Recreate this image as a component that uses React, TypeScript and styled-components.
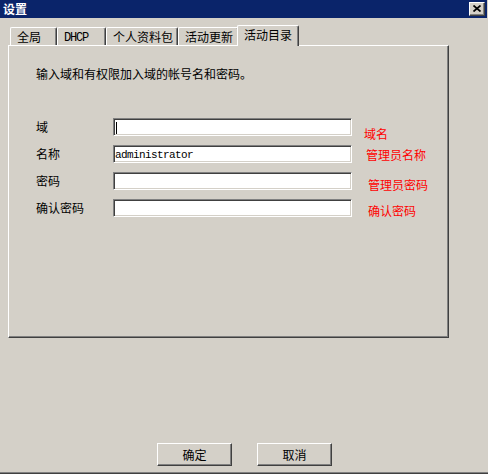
import React from "react";
import styled, { createGlobalStyle, css } from "styled-components";

const GlobalStyle = createGlobalStyle`
  html, body { margin: 0; padding: 0; background: #d4d0c8; }
  body {
    font-family: "Noto Sans CJK SC", "Noto Sans", sans-serif;
    font-size: 12px;
    color: #000;
  }
  * { box-sizing: border-box; }
`;

const Window = styled.div`
  width: 488px;
  height: 474px;
  background: #d4d0c8;
  display: flex;
  flex-direction: column;
  border-bottom: 1px solid #404040;
  box-shadow: inset 0 -1px #808080;
  overflow: hidden;
`;

const TitleBar = styled.div`
  height: 18px;
  margin-right: 1px;
  background: #0a246a;
  display: flex;
  align-items: flex-start;
  justify-content: space-between;
  padding: 0 2px 0 3px;
`;

const TitleText = styled.span`
  color: #fff;
  font-weight: bold;
  font-size: 12px;
  line-height: 18px;
`;

const CloseButton = styled.div`
  width: 16px;
  height: 14px;
  margin-top: 2px;
  background: #d4d0c8;
  border-top: 1px solid #fff;
  border-left: 1px solid #fff;
  border-right: 1px solid #404040;
  border-bottom: 1px solid #404040;
  box-shadow: inset -1px -1px #808080;
  display: flex;
  align-items: center;
  justify-content: center;
  padding: 0 1px 1px 0;
`;

const Body = styled.div`
  padding: 7px 0 0 8px;
  display: flex;
  flex-direction: column;
`;

const TabStrip = styled.div`
  display: flex;
  align-items: flex-end;
  height: 20px;
  padding-left: 2px;
  position: relative;
  z-index: 1;
`;

const Tab = styled.div<{ $active?: boolean; $w: number; $mono?: boolean }>`
  width: ${(p) => p.$w}px;
  height: 18px;
  padding: 1px 0 0 6px;
  line-height: 16px;
  white-space: nowrap;
  background: #d4d0c8;
  border-left: 1px solid #fff;
  border-top: 1px solid #fff;
  border-right: 1px solid #404040;
  box-shadow: inset -1px 0 #808080;
  border-radius: 2px 2px 0 0;
  flex: none;
  ${(p) =>
    p.$mono &&
    css`
      font-family: "Liberation Mono", monospace;
      font-size: 12px;
      letter-spacing: -1.2px;
      padding-top: 2px;
    `}
  ${(p) =>
    p.$active &&
    css`
      width: ${p.$w + 4}px;
      height: 21px;
      margin: 0 -2px -1px -2px;
      position: relative;
      z-index: 2;
    `}
`;

const Panel = styled.div`
  width: 441px;
  height: 293px;
  border-top: 1px solid #fff;
  border-left: 1px solid #fff;
  border-right: 1px solid #404040;
  border-bottom: 1px solid #404040;
  box-shadow: inset -1px -1px #808080;
  padding: 20px 0 0 27px;
  position: relative;
  z-index: 0;
`;

const Intro = styled.p`
  margin: 0;
  line-height: 16px;
  height: 16px;
`;

const Form = styled.div`
  margin-top: 36px;
  display: grid;
  grid-template-columns: 77px 239px auto;
  grid-auto-rows: 18px;
  row-gap: 9px;
  align-items: center;
`;

const Label = styled.span`
  line-height: 16px;
  white-space: nowrap;
`;

const Field = styled.div`
  height: 18px;
  width: 239px;
  background: #fff;
  border-top: 1px solid #808080;
  border-left: 1px solid #808080;
  border-bottom: 1px solid #fff;
  border-right: 1px solid #fff;
  box-shadow: inset 1px 1px #404040, inset -1px -1px #d4d0c8;
  display: flex;
  align-items: center;
  padding: 1px 0 0 1px;
  font-family: "Liberation Mono", monospace;
  font-size: 11px;
  letter-spacing: -0.6px;
  white-space: nowrap;
`;

const Caret = styled.span`
  display: block;
  width: 1px;
  height: 12px;
  background: #000;
  margin-left: 1px;
`;

const Note = styled.span<{ $dx: number; $dy: number }>`
  color: #ff0000;
  line-height: 16px;
  white-space: nowrap;
  margin-left: 12px;
  transform: translate(${(p) => p.$dx}px, ${(p) => p.$dy}px);
`;

const ButtonRow = styled.div`
  margin-top: 105px;
  display: flex;
  justify-content: center;
  gap: 25px;
  padding-left: 1px;
`;

const Button = styled.button`
  width: 75px;
  height: 23px;
  padding: 0;
  margin: 0;
  background: #d4d0c8;
  border-top: 1px solid #fff;
  border-left: 1px solid #fff;
  border-right: 1px solid #404040;
  border-bottom: 1px solid #404040;
  border-radius: 0;
  box-shadow: inset -1px -1px #808080;
  font-family: "Noto Sans CJK SC", "Noto Sans", sans-serif;
  font-size: 12px;
  line-height: 16px;
  color: #000;
  display: flex;
  align-items: center;
  justify-content: center;
`;

const tabs = [
  { label: "全局", w: 47 },
  { label: "DHCP", w: 49, mono: true },
  { label: "个人资料包", w: 72 },
  { label: "活动更新", w: 61 },
  { label: "活动目录", w: 58, active: true },
];

const rows = [
  { label: "域", value: "", caret: true, note: "域名", dx: 0, dy: 6.5 },
  { label: "名称", value: "administrator", note: "管理员名称", dx: 2, dy: 1 },
  { label: "密码", value: "", note: "管理员密码", dx: 4, dy: 3.5 },
  { label: "确认密码", value: "", note: "确认密码", dx: 4, dy: 2.5 },
];

export default function App() {
  return (
    <>
      <GlobalStyle />
      <Window>
        <TitleBar>
          <TitleText>设置</TitleText>
          <CloseButton>
            <svg width="8" height="7" viewBox="0 0 8 7">
              <path d="M0.5 0.5 L7.5 6.5 M7.5 0.5 L0.5 6.5" stroke="#000" strokeWidth="1.7" />
            </svg>
          </CloseButton>
        </TitleBar>
        <Body>
          <TabStrip>
            {tabs.map((t) => (
              <Tab key={t.label} $w={t.w} $active={t.active} $mono={t.mono}>
                {t.label}
              </Tab>
            ))}
          </TabStrip>
          <Panel>
            <Intro>输入域和有权限加入域的帐号名和密码。</Intro>
            <Form>
              {rows.map((r) => (
                <React.Fragment key={r.label + r.note}>
                  <Label>{r.label}</Label>
                  <Field>
                    {r.caret ? <Caret /> : r.value}
                  </Field>
                  <Note $dx={r.dx} $dy={r.dy}>
                    {r.note}
                  </Note>
                </React.Fragment>
              ))}
            </Form>
          </Panel>
        </Body>
        <ButtonRow>
          <Button>确定</Button>
          <Button>取消</Button>
        </ButtonRow>
      </Window>
    </>
  );
}
